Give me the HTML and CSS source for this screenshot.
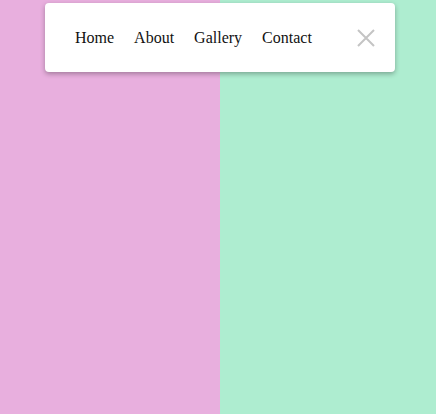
FILE: index.html
```html
<!DOCTYPE html>
<html>
<head>
<meta charset="utf-8">
<link rel="stylesheet" href="styles.css">
</head>
<body>
<div class="split">
  <div class="pane pane-pink"></div>
  <div class="pane pane-green"></div>
</div>
<nav class="menu">
  <ul class="links">
    <li><a href="#">Home</a></li>
    <li><a href="#">About</a></li>
    <li><a href="#">Gallery</a></li>
    <li><a href="#">Contact</a></li>
  </ul>
  <button class="close" aria-label="Close">
    <svg width="18" height="18" viewBox="0 0 18 18"><path d="M1 1L17 17M17 1L1 17" stroke="#c4c4c4" stroke-width="2" fill="none"/></svg>
  </button>
</nav>
</body>
</html>
```
FILE: styles.css
```css
html, body { margin: 0; padding: 0; }
body { font-family: "Liberation Serif", "Times New Roman", serif; }
.split { display: grid; grid-template-columns: 220px 1fr; height: 414px; }
.pane-pink { background: #e8afde; }
.pane-green { background: #aeedd0; }
.menu {
  position: absolute; top: 3px; left: 45px; width: 350px; height: 69px;
  box-sizing: border-box; background: #fff; border-radius: 4px;
  box-shadow: 0 2px 5px rgba(0,0,0,0.3);
  display: flex; align-items: center; justify-content: space-between;
  padding: 0 20px 0 30px;
}
.links { list-style: none; margin: 0; padding: 0; display: flex; gap: 20px; }
.links a { color: #111; text-decoration: none; font-size: 16px; }
.close { border: 0; background: none; padding: 0; width: 18px; height: 18px; display: flex; }
```
